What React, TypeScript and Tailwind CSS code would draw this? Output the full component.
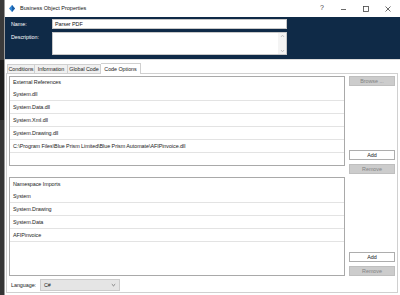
import React from 'react';

const font = { fontFamily: '"Liberation Sans", Arial, sans-serif' };

function ListRow({ text }: { text: string }) {
  return (
    <div className="h-[13px] flex items-center pl-[3px] border-b border-[#e3e3e3] whitespace-nowrap">
      {text}
    </div>
  );
}

function WinButton({ label, enabled }: { label: string; enabled?: boolean }) {
  return (
    <div
      className={
        enabled
          ? 'h-[10px] w-[46px] flex items-center justify-center border border-[#adadad] bg-white text-[#222]'
          : 'h-[10px] w-[46px] flex items-center justify-center border border-[#bfbfbf] bg-[#cccccc] text-[#838383]'
      }
    >
      {label}
    </div>
  );
}

export default function App() {
  const refs = [
    'System.dll',
    'System.Data.dll',
    'System.Xml.dll',
    'System.Drawing.dll',
    'C:\\Program Files\\Blue Prism Limited\\Blue Prism Automate\\AFIPinvoice.dll',
  ];
  const imports = ['System', 'System.Drawing', 'System.Data', 'AFIPinvoice'];

  return (
    <div
      className="w-[400px] h-[295px] flex overflow-hidden text-[5.4px] tracking-[-0.05px] text-[#1a1a1a]"
      style={font}
    >
      {/* desktop behind the dialog */}
      <div className="w-[5px] h-full bg-[#2b2b2b] flex flex-col">
        <div className="h-[60px] bg-[#3a3a3a]" />
        <div className="h-[60px] bg-[#1e1e1e]" />
        <div className="flex-1 bg-[#353535]" />
      </div>

      <div className="flex-1 flex flex-col bg-white border-l border-[#9a9a9a]">
        {/* title bar */}
        <div className="h-[17px] flex items-center pl-[4px] pr-[1px] bg-white">
          <svg width="6" height="7" viewBox="0 0 6 7" className="mr-[5px]">
            <polygon points="0,3.5 3,0 6,3.5 3,7" fill="#2f86d6" />
            <polygon points="3,0 6,3.5 3,7" fill="#1d5fa6" />
          </svg>
          <span className="text-[5.5px] tracking-normal text-[#111]">Business Object Properties</span>
          <div className="ml-auto flex items-center text-[#444]">
            <span className="w-[22px] text-center text-[7px]">?</span>
            <svg width="22" height="8" viewBox="0 0 22 8">
              <line x1="8" y1="4.5" x2="13" y2="4.5" stroke="#444" strokeWidth="0.8" />
            </svg>
            <svg width="22" height="8" viewBox="0 0 22 8">
              <rect x="8.5" y="1.5" width="5" height="5" fill="none" stroke="#444" strokeWidth="0.8" />
            </svg>
            <svg width="22" height="8" viewBox="0 0 22 8">
              <path d="M8.5 1.5 L13.5 6.5 M13.5 1.5 L8.5 6.5" stroke="#444" strokeWidth="0.8" />
            </svg>
          </div>
        </div>

        {/* header panel */}
        <div className="h-[42px] bg-[#0f2a47] pl-[6px] pt-[2px] flex flex-col gap-[3px]">
          <div className="flex items-center">
            <span className="w-[41px] text-white">Name:</span>
            <div className="w-[235px] h-[10px] bg-white border border-[#c8c8c8] flex items-center pl-[2px] text-[#111]">
              Parser PDF
            </div>
          </div>
          <div className="flex items-start">
            <span className="w-[41px] text-white pt-[1px]">Description:</span>
            <div className="w-[235px] h-[23px] bg-white border border-[#c8c8c8] flex justify-end">
              <div className="w-[8px] h-full flex flex-col items-center justify-between py-[1px] bg-[#f4f4f4]">
                <svg width="5" height="4" viewBox="0 0 5 4">
                  <path d="M1 3 L2.5 1.2 L4 3" fill="none" stroke="#b0b0b0" strokeWidth="0.7" />
                </svg>
                <svg width="5" height="4" viewBox="0 0 5 4">
                  <path d="M1 1 L2.5 2.8 L4 1" fill="none" stroke="#b0b0b0" strokeWidth="0.7" />
                </svg>
              </div>
            </div>
          </div>
        </div>

        {/* tabs */}
        <div className="h-[14px] flex items-end pl-[2px] border-t border-[#dcdcdc] bg-white">
          <div className="h-[9px] w-[28px] flex items-center justify-center border border-b-0 border-[#d0d0d0] bg-[#f0f0f0]">Conditions</div>
          <div className="h-[9px] w-[33px] flex items-center justify-center border border-b-0 border-l-0 border-[#d0d0d0] bg-[#f0f0f0]">Information</div>
          <div className="h-[9px] w-[33px] flex items-center justify-center border border-b-0 border-l-0 border-[#d0d0d0] bg-[#f0f0f0]">Global Code</div>
          <div className="h-[11px] w-[40px] flex items-center justify-center border border-b-0 border-l-0 border-[#d0d0d0] bg-white -mb-px relative">
            Code Options
          </div>
        </div>

        {/* tab page */}
        <div className="h-[220px] mr-[2px] ml-[1px] border border-[#d0d0d0] bg-white px-[2px] pt-[2px] flex flex-col">
          <div className="flex items-start gap-[4px]">
            <div className="w-[336px] h-[90px] border border-[#a9a9a9] bg-white flex flex-col">
              <div className="h-[11px] flex items-center pl-[3px]">External References</div>
              {refs.map((r) => (
                <ListRow key={r} text={r} />
              ))}
            </div>
            <div className="h-[98px] flex flex-col justify-between">
              <WinButton label="Browse ..." />
              <div className="flex flex-col gap-[4px]">
                <WinButton label="Add" enabled />
                <WinButton label="Remove" />
              </div>
            </div>
          </div>

          <div className="flex items-start gap-[4px] mt-[3px]">
            <div className="w-[336px] h-[99px] border border-[#a9a9a9] bg-white flex flex-col">
              <div className="h-[12px] flex items-center pl-[3px]">Namespace Imports</div>
              {imports.map((r) => (
                <ListRow key={r} text={r} />
              ))}
            </div>
            <div className="h-[99px] flex flex-col justify-end gap-[4px]">
              <WinButton label="Add" enabled />
              <WinButton label="Remove" />
            </div>
          </div>

          <div className="flex items-center mt-[3px] pl-[2px]">
            <span className="w-[29px]">Language:</span>
            <div className="w-[80px] h-[12px] bg-[#e5e5e5] border border-[#cccccc] flex items-center pl-[3px] pr-[3px]">
              <span>C#</span>
              <svg width="5" height="4" viewBox="0 0 5 4" className="ml-auto">
                <path d="M0.8 1.2 L2.5 2.8 L4.2 1.2" fill="none" stroke="#555" strokeWidth="0.7" />
              </svg>
            </div>
          </div>
        </div>
      </div>
    </div>
  );
}
